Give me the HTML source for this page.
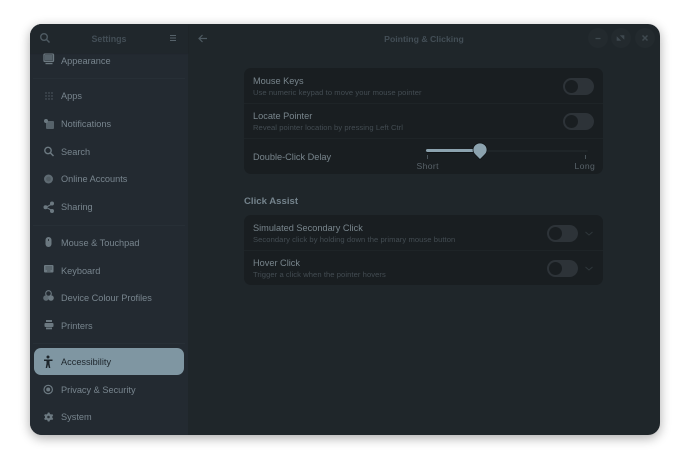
<!DOCTYPE html>
<html><head><meta charset="utf-8">
<style>
html,body{margin:0;padding:0;width:690px;height:471px;overflow:hidden;background:#fff;font-family:"Liberation Sans",sans-serif}
.abs,.t,.s,.nav,svg{position:absolute}
#win{position:absolute;left:30px;top:24px;width:630px;height:411px;border-radius:12px;background:#1f262a;overflow:hidden;box-shadow:0 3px 11px rgba(0,0,0,.33)}
#side{position:absolute;left:0;top:0;width:158px;height:411px;background:#232a31}
#sideh{position:absolute;left:0;top:0;width:158px;height:29px;background:#20272c;box-shadow:0 1px 1px rgba(0,0,0,.12)}
.nav{left:31px;font-size:9.2px;letter-spacing:0;color:#78858e;line-height:12px;white-space:nowrap}
.sep{position:absolute;left:3px;width:152px;height:1px;background:#272f36}
.panel{position:absolute;background:#191e21;border-radius:7px}
.pl{position:absolute;left:0;right:0;height:1px;background:#1e2427}
.t{font-size:9.2px;letter-spacing:0;color:#78858c;line-height:12px;white-space:nowrap}
.s{font-size:7.6px;letter-spacing:.07px;color:#434c52;line-height:10px;white-space:nowrap}
.sw{position:absolute;width:31px;height:17px;border-radius:9px;background:#2d3338}
.sw:before{content:"";position:absolute;left:2px;top:2px;width:13px;height:13px;border-radius:50%;background:#191e21}
.wb{position:absolute;top:4px;width:20px;height:20px;border-radius:50%;background:#232a2e}
</style></head><body>
<div id="win">
<div id="side">
<div class="nav" style="top:30.500px">Appearance</div>
<div class="sep" style="top:54px"></div>
<div class="nav" style="top:66px">Apps</div>
<div class="nav" style="top:94px">Notifications</div>
<div class="nav" style="top:122px">Search</div>
<div class="nav" style="top:149px">Online Accounts</div>
<div class="nav" style="top:177px">Sharing</div>
<div class="sep" style="top:201px"></div>
<div class="nav" style="top:213px">Mouse &amp; Touchpad</div>
<div class="nav" style="top:240.500px">Keyboard</div>
<div class="nav" style="top:268px">Device Colour Profiles</div>
<div class="nav" style="top:296px">Printers</div>
<div class="sep" style="top:319px"></div>
<div style="position:absolute;left:4px;top:324px;width:150px;height:27px;border-radius:7px;background:#7f96a2"></div>
<div class="nav" style="top:332px;color:#1d252b">Accessibility</div>
<div class="nav" style="top:359.500px">Privacy &amp; Security</div>
<div class="nav" style="top:387px">System</div>

<svg style="left:0;top:0" width="30" height="411" viewBox="0 0 30 411" fill="#6c7981" stroke="none">
<!-- appearance -->
<rect x="14" y="30" width="9.5" height="7.5" rx="1" fill="none" stroke="#6c7981" stroke-width="1.3"/><rect x="15" y="31" width="7.5" height="5.5" fill="#56626a"/><rect x="15.5" y="39" width="7" height="1.2"/>
<!-- apps -->
<g fill="#56626a"><circle cx="16" cy="69" r=".7"/><circle cx="19" cy="69" r=".7"/><circle cx="22" cy="69" r=".7"/><circle cx="16" cy="72" r=".7"/><circle cx="19" cy="72" r=".7"/><circle cx="22" cy="72" r=".7"/><circle cx="16" cy="75" r=".7"/><circle cx="19" cy="75" r=".7"/><circle cx="22" cy="75" r=".7"/></g>
<!-- notifications -->
<rect x="16" y="97" width="8" height="8" rx="1" fill="#56626a"/><circle cx="16" cy="97" r="2" fill="#6c7981"/>
<!-- search -->
<circle cx="18" cy="126.5" r="3.2" fill="none" stroke="#6c7981" stroke-width="1.4"/><path d="M20.5 129l3 3" stroke="#6c7981" stroke-width="1.5"/>
<!-- online -->
<circle cx="18.500" cy="155" r="4.500" fill="#5f6b73"/><circle cx="18.500" cy="155" r="2.400" fill="#525d64"/>
<!-- sharing -->
<path d="M22 180l-6 3.300 6 3.200" fill="none" stroke="#6c7981" stroke-width="1.100"/><circle cx="22" cy="179.500" r="2"/><circle cx="15.500" cy="183.300" r="2"/><circle cx="22" cy="187" r="2"/>
<!-- mouse -->
<rect x="15.500" y="213" width="6" height="10" rx="3" fill="#6c7981"/><rect x="18" y="215" width="1" height="2" fill="#2f373d"/>
<!-- keyboard -->
<rect x="14" y="241" width="9.500" height="7.500" rx="1" fill="#6c7981"/><path d="M15.500 243h6.500M15.500 245h6.500M17 247h3.500" stroke="#3a444b" stroke-width=".7"/>
<!-- colour -->
<circle cx="18.500" cy="269.500" r="2.800" fill="none" stroke="#6c7981" stroke-width="1.100"/><circle cx="16" cy="274" r="2.800" fill="#5f6b73"/><circle cx="21" cy="274" r="2.800" fill="#6c7981"/>
<!-- printers -->
<rect x="16" y="296" width="6" height="2"/><rect x="14.500" y="299" width="9" height="4" rx="1"/><rect x="16" y="303.500" width="6" height="1.800"/>
<!-- accessibility -->
<g fill="#1d252b"><circle cx="18" cy="333" r="1.500"/><path d="M14 335.500h8.500v1.500h-3v2.500l.8 4.500h-1.400l-.9-3.500-.9 3.500h-1.400l.8-4.500v-2.500h-2.500z"/></g>
<!-- privacy -->
<circle cx="18.200" cy="365.500" r="4.200" fill="none" stroke="#6c7981" stroke-width="1.200"/><circle cx="18.200" cy="365.500" r="2" fill="#6c7981"/>
<!-- system -->
<path d="M18.300 388.500l1.200.1.400 1.300 1.100.6 1.300-.4.900 1.300-.9 1 0 1.300.9 1-.9 1.300-1.300-.4-1.100.6-.4 1.300h-1.700l-.4-1.300-1.100-.6-1.300.4-.9-1.300.9-1v-1.300l-.9-1 .9-1.300 1.300.4 1.100-.6.400-1.300z"/><circle cx="18.500" cy="393" r="1.300" fill="#2a3238"/>
</svg>

<div id="sideh"></div>
<svg style="left:9px;top:8px" width="12" height="13" viewBox="0 0 12 13"><circle cx="5" cy="5" r="3.300" fill="none" stroke="#4e5a62" stroke-width="1.400"/><path d="M7.500 7.500l3 3" stroke="#4e5a62" stroke-width="1.500"/></svg>
<div class="abs" style="left:0;width:158px;top:8.500px;text-align:center;font-size:8.900px;font-weight:bold;letter-spacing:0;color:#434e56;line-height:12px">Settings</div>
<svg style="left:139px;top:10px" width="8" height="9" viewBox="0 0 8 9"><path d="M1 1.500h6M1 4h6M1 6.500h6" stroke="#56626a" stroke-width="1.100"/></svg>
</div>

<svg style="left:167px;top:9px" width="12" height="11" viewBox="0 0 12 11"><path d="M10 5.500H2.500M5.500 2l-3.500 3.500 3.500 3.500" fill="none" stroke="#4e5a62" stroke-width="1.200"/></svg>
<div class="abs" style="left:158px;width:472px;top:8.500px;text-align:center;font-size:8.700px;font-weight:bold;letter-spacing:0;color:#434e56;line-height:12px">Pointing &amp; Clicking</div>
<div class="wb" style="left:558px"></div><div class="wb" style="left:581px"></div><div class="wb" style="left:605px"></div>
<svg style="left:558px;top:4px" width="70" height="20" viewBox="0 0 70 20"><path d="M7.500 10.500h5" stroke="#3f494f" stroke-width="1.200"/><path d="M29 9v3.500h3.500zM36 11V7.500h-3.500z" fill="#3f494f" stroke="#3f494f" stroke-width=".6"/><path d="M54.500 7.500l5 5M59.500 7.500l-5 5" stroke="#3f494f" stroke-width="1.500"/></svg>

<div class="panel" style="left:214px;top:44px;width:359px;height:106px">
<div class="pl" style="top:35px"></div><div class="pl" style="top:70px"></div>
<div class="t" style="left:9px;top:6.500px">Mouse Keys</div>
<div class="s" style="left:9px;top:19.500px">Use numeric keypad to move your mouse pointer</div>
<div class="t" style="left:9px;top:42px">Locate Pointer</div>
<div class="s" style="left:9px;top:54.500px">Reveal pointer location by pressing Left Ctrl</div>
<div class="t" style="left:9px;top:82.500px">Double-Click Delay</div>
<div class="sw" style="left:319px;top:10px"></div>
<div class="sw" style="left:319px;top:45px"></div>
<div class="abs" style="left:181px;top:82px;width:163px;height:2px;border-radius:1px;background:#1f2528"></div>
<div class="abs" style="left:182px;top:81px;width:54px;height:3px;border-radius:2px;background:#8ca3af;box-shadow:0 1px 0 #0f1315"></div>
<svg style="left:228px;top:74px" width="16" height="19" viewBox="0 0 16 19"><path d="M8 1a7 7 0 0 1 7 7c0 2.200-1 3.600-2.500 5L8 17.500 3.500 13C2 11.600 1 10.200 1 8A7 7 0 0 1 8 1z" fill="#8ca3af" stroke="#0f1315" stroke-width=".7"/></svg>
<div class="abs" style="left:183px;top:87px;width:1px;height:4px;background:#4a545a"></div>
<div class="abs" style="left:341px;top:87px;width:1px;height:4px;background:#4a545a"></div>
<div class="s" style="left:172.500px;top:92.500px;font-size:8.600px;letter-spacing:.38px;color:#59636a;line-height:11px">Short</div>
<div class="s" style="left:330.500px;top:92.500px;font-size:8.600px;letter-spacing:.38px;color:#59636a;line-height:11px">Long</div>
</div>

<div class="abs" style="left:214px;top:171px;font-size:9.600px;font-weight:bold;letter-spacing:0;color:#74838c;line-height:13px">Click Assist</div>

<div class="panel" style="left:214px;top:191px;width:359px;height:70px">
<div class="pl" style="top:35px"></div>
<div class="t" style="left:9px;top:6.500px">Simulated Secondary Click</div>
<div class="s" style="left:9px;top:19.500px">Secondary click by holding down the primary mouse button</div>
<div class="t" style="left:9px;top:42px">Hover Click</div>
<div class="s" style="left:9px;top:54.500px">Trigger a click when the pointer hovers</div>
<div class="sw" style="left:303px;top:9.500px"></div>
<div class="sw" style="left:303px;top:45px"></div>
<svg style="left:340px;top:15.500px" width="10" height="6" viewBox="0 0 10 6"><path d="M1.500 1l3.500 3 3.500-3" fill="none" stroke="#2f373b" stroke-width="1"/></svg>
<svg style="left:340px;top:50.500px" width="10" height="6" viewBox="0 0 10 6"><path d="M1.500 1l3.500 3 3.500-3" fill="none" stroke="#2f373b" stroke-width="1"/></svg>
</div>
</div>
</body></html>
